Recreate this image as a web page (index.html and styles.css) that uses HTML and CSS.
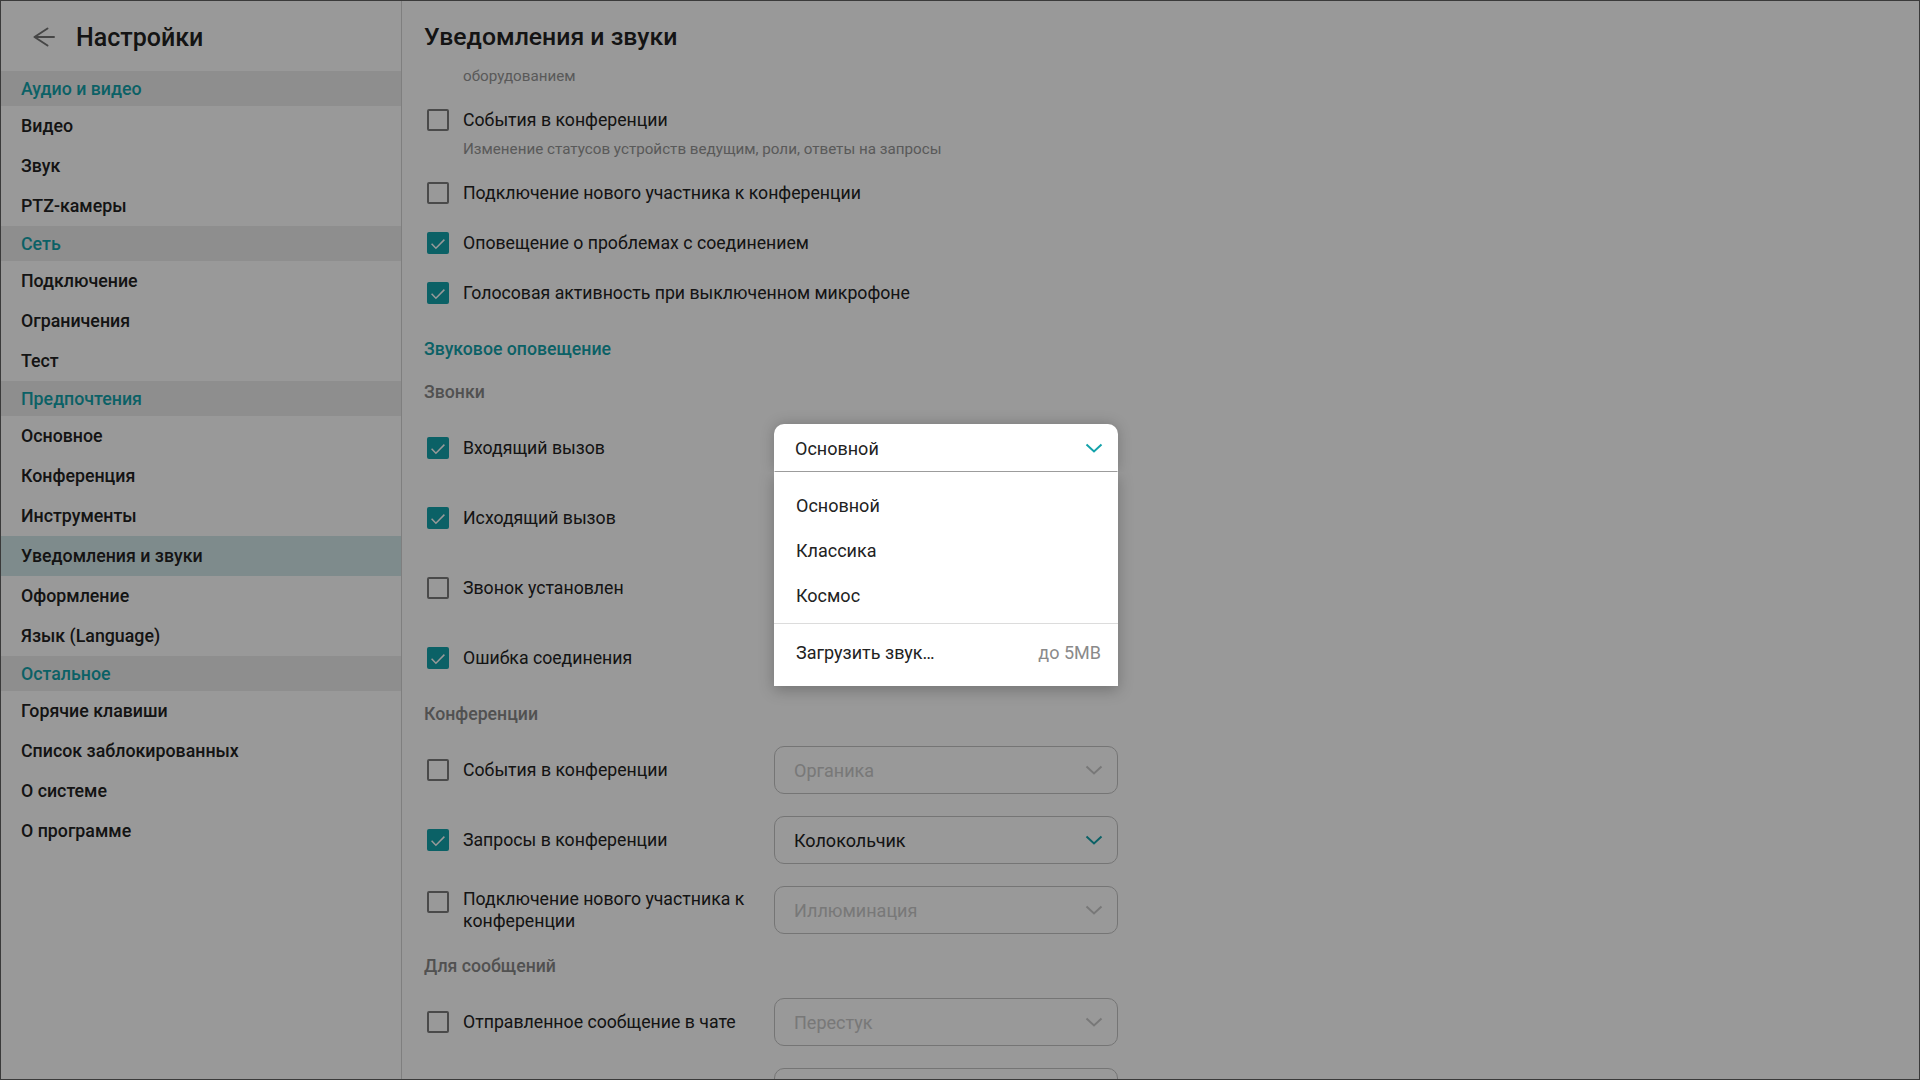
FILE: index.html
```html
<!DOCTYPE html>
<html lang="ru">
<head>
<meta charset="utf-8">
<title>Настройки</title>
<link rel="stylesheet" href="styles.css">
</head>
<body>
<div class="app">
  <aside class="sidebar">
    <div class="side-header">
      <svg class="back" viewBox="0 0 22 20"><path d="M21 10H1.5M14.5 1.5L1.5 10l13 8.5" fill="none" stroke="#767676" stroke-width="2" stroke-linecap="round" stroke-linejoin="round"/></svg>
      <span class="side-title">Настройки</span>
    </div>
    <nav class="side-nav">
      <div class="nav-group">Аудио и видео</div>
      <div class="nav-item">Видео</div>
      <div class="nav-item">Звук</div>
      <div class="nav-item">PTZ-камеры</div>
      <div class="nav-group">Сеть</div>
      <div class="nav-item">Подключение</div>
      <div class="nav-item">Ограничения</div>
      <div class="nav-item">Тест</div>
      <div class="nav-group">Предпочтения</div>
      <div class="nav-item">Основное</div>
      <div class="nav-item">Конференция</div>
      <div class="nav-item">Инструменты</div>
      <div class="nav-item active">Уведомления и звуки</div>
      <div class="nav-item">Оформление</div>
      <div class="nav-item">Язык (Language)</div>
      <div class="nav-group">Остальное</div>
      <div class="nav-item">Горячие клавиши</div>
      <div class="nav-item">Список заблокированных</div>
      <div class="nav-item">О системе</div>
      <div class="nav-item">О программе</div>
    </nav>
  </aside>

  <main class="content">
    <header class="content-header"><h1>Уведомления и звуки</h1></header>
    <div class="scroll">
      <p class="desc tail">оборудованием</p>

      <div class="check-item">
        <div class="check-row"><span class="cb"></span><span class="cb-label">События в конференции</span></div>
        <p class="desc">Изменение статусов устройств ведущим, роли, ответы на запросы</p>
      </div>
      <div class="check-item">
        <div class="check-row"><span class="cb"></span><span class="cb-label">Подключение нового участника к конференции</span></div>
      </div>
      <div class="check-item">
        <div class="check-row"><span class="cb on"><svg viewBox="0 0 22 22"><path d="M4.6 11.8l4.3 4.4 8.5-8.6" fill="none" stroke="#fff" stroke-width="1.5"/></svg></span><span class="cb-label">Оповещение о проблемах с соединением</span></div>
      </div>
      <div class="check-item">
        <div class="check-row"><span class="cb on"><svg viewBox="0 0 22 22"><path d="M4.6 11.8l4.3 4.4 8.5-8.6" fill="none" stroke="#fff" stroke-width="1.5"/></svg></span><span class="cb-label">Голосовая активность при выключенном микрофоне</span></div>
      </div>

      <h2 class="section-title">Звуковое оповещение</h2>

      <div class="sound-list">
        <h3 class="group-title">Звонки</h3>

        <div class="sound-row">
          <div class="check-row"><span class="cb on"><svg viewBox="0 0 22 22"><path d="M4.6 11.8l4.3 4.4 8.5-8.6" fill="none" stroke="#fff" stroke-width="1.5"/></svg></span><span class="cb-label">Входящий вызов</span></div>
          <div class="dropdown">
            <div class="select open"><span class="select-value">Основной</span><svg class="chev" viewBox="0 0 24 24"><path d="M4.5 8.5l7.5 7 7.5-7" fill="none" stroke="currentColor" stroke-width="2"/></svg></div>
            <div class="menu">
              <div class="menu-item">Основной</div>
              <div class="menu-item">Классика</div>
              <div class="menu-item">Космос</div>
              <div class="menu-divider"></div>
              <div class="menu-item"><span>Загрузить звук…</span><span class="menu-hint">до 5MB</span></div>
            </div>
          </div>
        </div>

        <div class="sound-row">
          <div class="check-row"><span class="cb on"><svg viewBox="0 0 22 22"><path d="M4.6 11.8l4.3 4.4 8.5-8.6" fill="none" stroke="#fff" stroke-width="1.5"/></svg></span><span class="cb-label">Исходящий вызов</span></div>
          <div class="select"><span class="select-value"></span><svg class="chev" viewBox="0 0 24 24"><path d="M4.5 8.5l7.5 7 7.5-7" fill="none" stroke="currentColor" stroke-width="2"/></svg></div>
        </div>

        <div class="sound-row">
          <div class="check-row"><span class="cb"></span><span class="cb-label">Звонок установлен</span></div>
          <div class="select disabled"><span class="select-value"></span><svg class="chev" viewBox="0 0 24 24"><path d="M4.5 8.5l7.5 7 7.5-7" fill="none" stroke="currentColor" stroke-width="2"/></svg></div>
        </div>

        <div class="sound-row">
          <div class="check-row"><span class="cb on"><svg viewBox="0 0 22 22"><path d="M4.6 11.8l4.3 4.4 8.5-8.6" fill="none" stroke="#fff" stroke-width="1.5"/></svg></span><span class="cb-label">Ошибка соединения</span></div>
          <div class="select"><span class="select-value"></span><svg class="chev" viewBox="0 0 24 24"><path d="M4.5 8.5l7.5 7 7.5-7" fill="none" stroke="currentColor" stroke-width="2"/></svg></div>
        </div>

        <h3 class="group-title">Конференции</h3>

        <div class="sound-row">
          <div class="check-row"><span class="cb"></span><span class="cb-label">События в конференции</span></div>
          <div class="select disabled"><span class="select-value">Органика</span><svg class="chev" viewBox="0 0 24 24"><path d="M4.5 8.5l7.5 7 7.5-7" fill="none" stroke="currentColor" stroke-width="2"/></svg></div>
        </div>

        <div class="sound-row">
          <div class="check-row"><span class="cb on"><svg viewBox="0 0 22 22"><path d="M4.6 11.8l4.3 4.4 8.5-8.6" fill="none" stroke="#fff" stroke-width="1.5"/></svg></span><span class="cb-label">Запросы в конференции</span></div>
          <div class="select"><span class="select-value">Колокольчик</span><svg class="chev" viewBox="0 0 24 24"><path d="M4.5 8.5l7.5 7 7.5-7" fill="none" stroke="currentColor" stroke-width="2"/></svg></div>
        </div>

        <div class="sound-row">
          <div class="check-row multi"><span class="cb"></span><span class="cb-label">Подключение нового участника к конференции</span></div>
          <div class="select disabled"><span class="select-value">Иллюминация</span><svg class="chev" viewBox="0 0 24 24"><path d="M4.5 8.5l7.5 7 7.5-7" fill="none" stroke="currentColor" stroke-width="2"/></svg></div>
        </div>

        <h3 class="group-title">Для сообщений</h3>

        <div class="sound-row">
          <div class="check-row"><span class="cb"></span><span class="cb-label">Отправленное сообщение в чате</span></div>
          <div class="select disabled"><span class="select-value">Перестук</span><svg class="chev" viewBox="0 0 24 24"><path d="M4.5 8.5l7.5 7 7.5-7" fill="none" stroke="currentColor" stroke-width="2"/></svg></div>
        </div>

        <div class="sound-row">
          <div class="check-row"><span class="cb"></span><span class="cb-label"></span></div>
          <div class="select disabled"><span class="select-value"></span></div>
        </div>
      </div>
    </div>
  </main>

  <div class="scrim"></div>
</div>
</body>
</html>
```

FILE: styles.css
```css
html, body {
  margin: 0;
  height: 100%;
  overflow: hidden;
}

body {
  font-family: Roboto, "Noto Sans", "Liberation Sans", sans-serif;
  color: #222;
  background: #3a3a3a;
}

.app {
  position: relative;
  display: flex;
  height: 100vh;
  box-sizing: border-box;
  border: 1px solid #3a3a3a;
  background: #fff;
  overflow: hidden;
}

/* ---------- sidebar ---------- */
.sidebar {
  width: 401px;
  flex: none;
  box-sizing: border-box;
  border-right: 1px solid #d4d4d4;
}

.side-header {
  height: 70px;
  box-sizing: border-box;
  padding: 2px 0 0 32px;
  display: flex;
  align-items: center;
}

.back {
  width: 22px;
  height: 20px;
  margin-right: 21px;
  flex: none;
}

.side-title {
  font-size: 25px;
  font-weight: 500;
  color: #222;
}

.nav-group {
  height: 35px;
  line-height: 35px;
  padding-left: 20px;
  background: #ededed;
  color: #13a2aa;
  font-size: 17.8px;
  font-weight: 500;
}

.nav-item {
  height: 40px;
  line-height: 40px;
  padding-left: 20px;
  font-size: 17.8px;
  font-weight: 500;
  color: #222;
}

.nav-item.active {
  background: #d3e8e9;
}

/* ---------- content ---------- */
.content {
  flex: 1;
  padding-left: 22px;
  overflow: hidden;
}

.content-header {
  height: 54px;
  margin-top: 8px;
  display: flex;
  align-items: center;
}

.content-header h1 {
  margin: 0;
  font-size: 24.8px;
  font-weight: 500;
  color: #222;
}

.desc {
  margin: 8px 0 -5px;
  padding-left: 39px;
  font-size: 15.2px;
  line-height: 20px;
  color: #959595;
}

.desc.tail {
  margin: 3px 0 9px;
}

.check-item {
  padding: 14px 0;
}

.check-row {
  display: flex;
  align-items: center;
  gap: 14px;
  font-size: 17.7px;
  line-height: 22px;
  color: #222;
}

.check-row.multi {
  align-items: flex-start;
}

.check-row.multi .cb {
  margin-top: 3px;
}

.cb {
  width: 22px;
  height: 22px;
  margin-left: 3px;
  flex: none;
  box-sizing: border-box;
  border: 2px solid #7c7c7c;
  border-radius: 2px;
}

.cb.on {
  border: none;
  background: #13a2aa;
}

.cb svg {
  display: block;
  width: 22px;
  height: 22px;
}

.section-title {
  margin: 20px 0 0;
  font-size: 17.7px;
  line-height: 22px;
  font-weight: 500;
  color: #13a2aa;
}

.group-title {
  margin: 21px 0 21px;
  font-size: 17.7px;
  line-height: 22px;
  font-weight: 500;
  color: #878787;
}

.sound-row {
  display: grid;
  grid-template-columns: 350px 344px;
  align-items: center;
  min-height: 48px;
}

.sound-row + .sound-row {
  margin-top: 22px;
}

.sound-row .check-row {
  padding-right: 20px;
}

/* ---------- select ---------- */
.select {
  height: 48px;
  box-sizing: border-box;
  border: 1px solid #c3c3c3;
  border-radius: 10px;
  padding: 0 11px 0 19px;
  display: flex;
  align-items: center;
  justify-content: space-between;
  font-size: 18px;
  color: #222;
  background: #fff;
}

.select .chev {
  width: 24px;
  height: 24px;
  color: #13a2aa;
  flex: none;
}

.select.disabled {
  color: #c9c9c9;
}

.select.disabled .chev {
  color: #c9c9c9;
}

.dropdown {
  position: relative;
  z-index: 20;
}

.select.open {
  border-color: transparent;
  border-bottom-color: #9c9c9c;
  border-radius: 10px 10px 0 0;
  padding-left: 20px;
  box-shadow: 0 0 14px rgba(0, 0, 0, 0.22);
  clip-path: inset(-30px -30px 0 -30px);
}

.menu {
  position: absolute;
  top: 100%;
  left: 0;
  right: 0;
  background: #fff;
  padding: 11px 0;
  box-shadow: 0 4px 14px rgba(0, 0, 0, 0.25);
  clip-path: inset(0 -30px -30px -30px);
}

.menu-item {
  height: 45px;
  padding: 0 17px 0 22px;
  display: flex;
  align-items: center;
  justify-content: space-between;
  font-size: 18px;
  color: #222;
}

.menu-hint {
  color: #8a8a8a;
}

.menu-divider {
  height: 1px;
  margin: 5px 0 6px;
  background: #dcdcdc;
}

/* ---------- scrim ---------- */
.scrim {
  position: absolute;
  inset: 0;
  background: rgba(0, 0, 0, 0.4);
  z-index: 10;
}
```
